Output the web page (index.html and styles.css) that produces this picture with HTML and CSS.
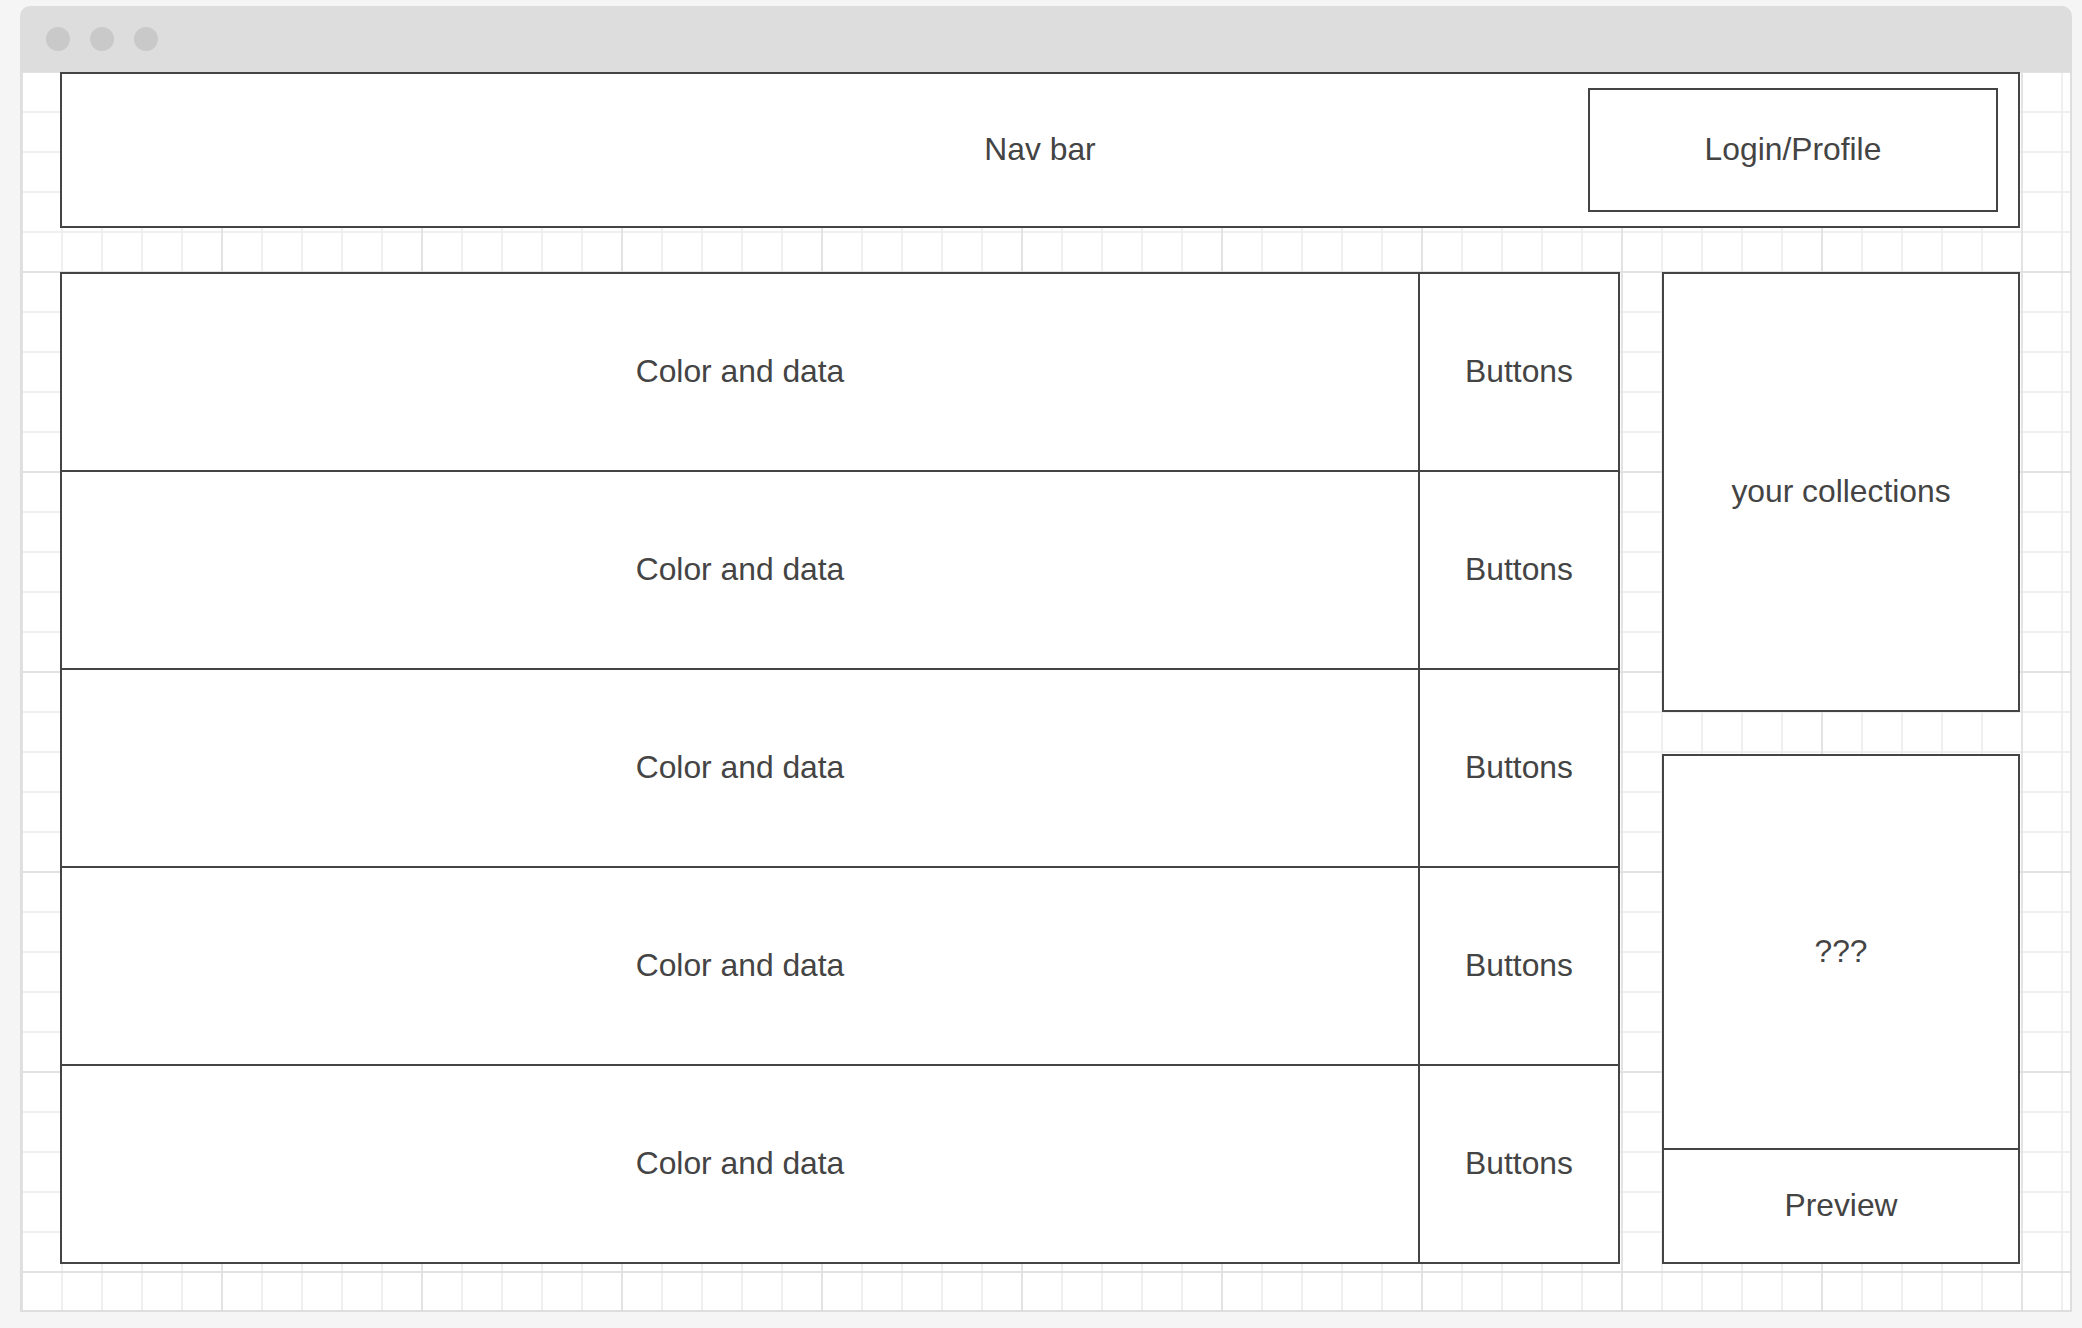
FILE: index.html
```html
<!DOCTYPE html>
<html lang="en">
<head>
<meta charset="utf-8">
<title>Wireframe</title>
<link rel="stylesheet" href="styles.css">
</head>
<body>
<div class="window">
  <div class="titlebar">
    <span class="dot"></span>
    <span class="dot"></span>
    <span class="dot"></span>
  </div>
  <div class="canvas">
    <header class="nav">
      <div class="nav-label">Nav bar</div>
      <div class="login">Login/Profile</div>
    </header>
    <main class="main">
      <section class="rows">
        <div class="row"><div class="data">Color and data</div><div class="buttons">Buttons</div></div>
        <div class="row"><div class="data">Color and data</div><div class="buttons">Buttons</div></div>
        <div class="row"><div class="data">Color and data</div><div class="buttons">Buttons</div></div>
        <div class="row"><div class="data">Color and data</div><div class="buttons">Buttons</div></div>
        <div class="row"><div class="data">Color and data</div><div class="buttons">Buttons</div></div>
      </section>
      <aside class="side">
        <div class="collections">your collections</div>
        <div class="panel">
          <div class="unknown">???</div>
          <div class="preview">Preview</div>
        </div>
      </aside>
    </main>
  </div>
</div>
</body>
</html>
```
FILE: styles.css
```css
* {
  box-sizing: border-box;
}

html, body {
  margin: 0;
  padding: 0;
  background: #f5f5f5;
}

body {
  width: 2082px;
  height: 1328px;
  padding: 6px 10px 16px 20px;
  font-family: "Liberation Sans", Arial, sans-serif;
  font-size: 31.8px;
  color: #444444;
  overflow: hidden;
}

.window {
  width: 2052px;
  height: 1306px;
  display: flex;
  flex-direction: column;
}

.titlebar {
  height: 66px;
  flex: 0 0 66px;
  background: #dddddd;
  border-radius: 10px 10px 0 0;
  display: flex;
  align-items: center;
  gap: 20px;
  padding-left: 26px;
}

.dot {
  width: 24px;
  height: 24px;
  border-radius: 50%;
  background: #c9c9c9;
}

.canvas {
  flex: 1 1 auto;
  border: 2px solid #dedede;
  border-top: none;
  background-color: #ffffff;
  background-image:
    linear-gradient(to right, #e2e2e2 0, #e2e2e2 2px, transparent 2px),
    linear-gradient(to bottom, #e2e2e2 0, #e2e2e2 2px, transparent 2px),
    linear-gradient(to right, #efefef 0, #efefef 2px, transparent 2px),
    linear-gradient(to bottom, #efefef 0, #efefef 2px, transparent 2px);
  background-size: 200px 200px, 200px 200px, 40px 40px, 40px 40px;
  background-position: -1px -1px, -1px -1px, -1px -1px, -1px -1px;
  padding: 0 50px 0 38px;
  display: flex;
  flex-direction: column;
  gap: 44px;
}

.nav {
  width: 1960px;
  height: 156px;
  border: 2px solid #444444;
  background: #ffffff;
  display: grid;
  grid-template-columns: 1fr;
  grid-template-rows: 1fr;
}

.nav-label {
  grid-area: 1 / 1;
  display: flex;
  align-items: center;
  justify-content: center;
  padding-bottom: 2px;
}

.login {
  grid-area: 1 / 1;
  justify-self: end;
  align-self: center;
  margin-right: 20px;
  width: 410px;
  height: 124px;
  border: 2px solid #444444;
  background: #ffffff;
  display: flex;
  align-items: center;
  justify-content: center;
  padding-bottom: 2px;
}

.main {
  display: flex;
  gap: 42px;
}

.rows {
  width: 1560px;
  border: 2px solid #444444;
  background: #ffffff;
  display: flex;
  flex-direction: column;
}

.row {
  height: 198px;
  display: flex;
  border-bottom: 2px solid #444444;
}

.row:last-child {
  height: 196px;
  border-bottom: none;
}

.data {
  flex: 1 1 auto;
  border-right: 2px solid #444444;
  display: flex;
  align-items: center;
  justify-content: center;
  padding-bottom: 2px;
}

.buttons {
  flex: 0 0 198px;
  display: flex;
  align-items: center;
  justify-content: center;
  padding-bottom: 2px;
}

.side {
  width: 358px;
  display: flex;
  flex-direction: column;
  gap: 42px;
}

.collections {
  height: 440px;
  border: 2px solid #444444;
  background: #ffffff;
  display: flex;
  align-items: center;
  justify-content: center;
  padding-bottom: 2px;
}

.panel {
  height: 510px;
  border: 2px solid #444444;
  background: #ffffff;
  display: flex;
  flex-direction: column;
}

.unknown {
  height: 394px;
  border-bottom: 2px solid #444444;
  display: flex;
  align-items: center;
  justify-content: center;
  padding-bottom: 2px;
}

.preview {
  flex: 1 1 auto;
  display: flex;
  align-items: center;
  justify-content: center;
  padding-bottom: 2px;
}
```
